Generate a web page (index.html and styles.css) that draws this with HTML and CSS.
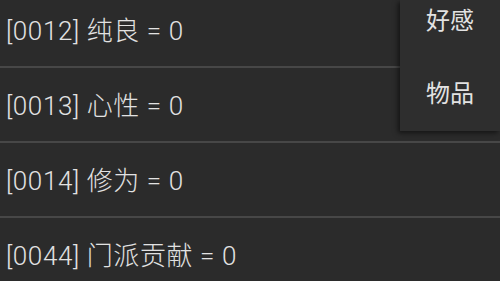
FILE: index.html
```html
<!DOCTYPE html>
<html>
<head>
    <title>Variables</title>
    <link rel="stylesheet" href="styles.css">
</head>
<body>
    <div class="screen">
        <ul class="var-list">
            <li class="var-row">[0012] 纯良 = 0</li>
            <li class="var-row">[0013] 心性 = 0</li>
            <li class="var-row">[0014] 修为 = 0</li>
            <li class="var-row">[0044] 门派贡献 = 0</li>
        </ul>

        <div class="popup-menu">
            <div class="menu-item">好感</div>
            <div class="menu-item">物品</div>
        </div>
    </div>
</body>
</html>
```

FILE: styles.css
```css
body {
    margin: 0;
    background-color: #2b2b2b;
    font-family: Roboto, "Noto Sans CJK SC", sans-serif;
    color: #e2e2e2;
    overflow: hidden;
}
.screen {
    position: relative;
    width: 500px;
    height: 281px;
    overflow: hidden;
}
.var-list {
    list-style: none;
    margin: -7px 0 0 0;
    padding: 0;
}
.var-row {
    height: 70px;
    line-height: 70px;
    padding: 3px 0 0 6px;
    font-size: 26px;
    font-weight: 300;
    letter-spacing: 0.6px;
    border-bottom: 2px solid #474747;
}
.popup-menu {
    position: absolute;
    top: 0;
    right: 0;
    width: 100px;
    height: 131px;
    background: #2e2e2e;
    box-shadow: -2px 2px 5px rgba(0,0,0,0.55);
}
.menu-item {
    height: 73px;
    line-height: 42px;
    text-align: center;
    font-size: 24px;
}
```
